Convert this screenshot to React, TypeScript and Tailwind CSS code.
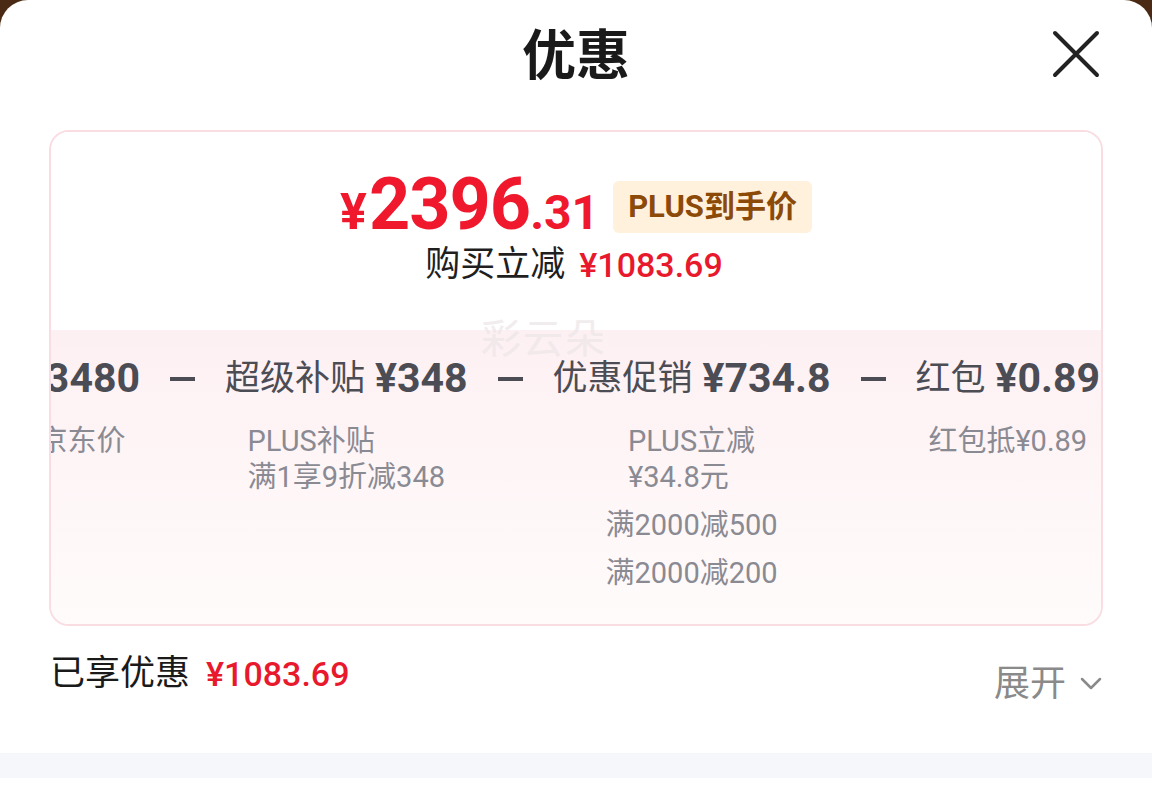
import React from 'react';

const FONT = { fontFamily: 'Roboto, "Noto Sans CJK SC", "Noto Sans", sans-serif' };

type Item = { label?: string; amount: string; notes: string[][] };

const items: Item[] = [
  { amount: '¥3480', notes: [['京东价']] },
  { label: '超级补贴', amount: '¥348', notes: [['PLUS补贴', '满1享9折减348']] },
  { label: '优惠促销', amount: '¥734.8', notes: [['PLUS立减', '¥34.8元'], ['满2000减500'], ['满2000减200']] },
  { label: '红包', amount: '¥0.89', notes: [['红包抵¥0.89']] },
];

const CloseIcon = () => (
  <svg width="48" height="48" viewBox="0 0 48 48" fill="none">
    <path d="M3 3 L45 45 M45 3 L3 45" stroke="#222" strokeWidth="4" strokeLinecap="round" />
  </svg>
);

export default function App() {
  return (
    <div className="w-[1152px] h-[791px] bg-[#4a2a14] overflow-hidden" style={FONT}>
      <div className="h-full bg-white rounded-t-[28px] flex flex-col">
        {/* Header */}
        <div className="relative h-[110px] flex items-center justify-center">
          <h1 className="text-[54px] font-bold text-[#1a1a1a] leading-none mt-[4px]">优惠</h1>
          <button className="absolute right-[52px] top-[30px]">
            <CloseIcon />
          </button>
        </div>

        {/* Card */}
        <div className="relative mx-[49px] mt-[20px] h-[496px] rounded-[20px] border-2 border-[#fadde3] overflow-hidden flex flex-col">
          <div className="h-[198px] bg-white flex flex-col items-center pt-[37px]">
            <div className="flex items-center gap-[14px]">
              <div className="flex items-baseline text-[#f0182c] font-bold leading-none">
                <span className="text-[50px] mr-[2px]">¥</span>
                <span className="text-[72px] tracking-[-1px]">2396</span>
                <span className="text-[48px]">.31</span>
              </div>
              <span className="mt-[4px] px-[15px] h-[52px] flex items-center rounded-[6px] bg-[#fff1dc] text-[#8c4a08] text-[31px] font-bold">
                PLUS到手价
              </span>
            </div>
            <div className="mt-[6px] flex items-center gap-[14px] leading-none pr-[4px]">
              <span className="text-[35px] text-[#1f1f1f]">购买立减</span>
              <span className="text-[34px] text-[#e8192c] font-medium">¥1083.69</span>
            </div>
          </div>

          <div className="flex-1 bg-gradient-to-b from-[#fdf0f3] to-[#fffbfb] pt-[20px]">
            <div className="flex justify-end overflow-hidden pr-[1px]">
              <div className="flex items-start gap-[30px] shrink-0">
                {items.map((it, i) => (
                  <React.Fragment key={i}>
                    {i > 0 && <div className="shrink-0 w-[25px] h-[4px] bg-[#4c4c54] mt-[27px]" />}
                    <div className="shrink-0 flex flex-col items-center">
                      <div className="flex items-center gap-[10px] h-[56px] text-[#4c4c54] leading-none whitespace-nowrap">
                        {it.label && <span className="text-[35px]">{it.label}</span>}
                        <span className="text-[41px] font-bold">{it.amount}</span>
                      </div>
                      <div className="mt-[17px] flex flex-col items-center gap-[12px]">
                        {it.notes.map((n, j) => (
                          <div key={j} className="text-[29px] leading-[36px] text-[#8a8a93] whitespace-nowrap">
                            {n.map((l, k) => (
                              <div key={k}>{l}</div>
                            ))}
                          </div>
                        ))}
                      </div>
                    </div>
                  </React.Fragment>
                ))}
              </div>
            </div>
          </div>

          {/* watermark */}
          <div className="absolute left-[430px] top-[178px] text-[40px] text-[#ece6e7] opacity-70 tracking-[2px] pointer-events-none">
            彩云朵
          </div>
        </div>

        {/* Summary */}
        <div className="mx-[50px] mt-[30px] flex items-start justify-between">
          <div className="flex items-center gap-[16px] leading-none">
            <span className="text-[35px] text-[#1a1a1a]">已享优惠</span>
            <span className="text-[34px] text-[#e8192c] font-medium">¥1083.69</span>
          </div>
          <div className="mt-[10px] flex items-center gap-[14px] text-[#8a8a8a] leading-none">
            <span className="text-[36px]">展开</span>
            <svg width="22" height="14" viewBox="0 0 22 14" fill="none">
              <path d="M2 2 L11 11 L20 2" stroke="#8a8a8a" strokeWidth="2.5" strokeLinecap="round" strokeLinejoin="round" />
            </svg>
          </div>
        </div>

        <div className="mt-auto mb-[13px] h-[25px] bg-[#f5f7fa]" />
      </div>
    </div>
  );
}
